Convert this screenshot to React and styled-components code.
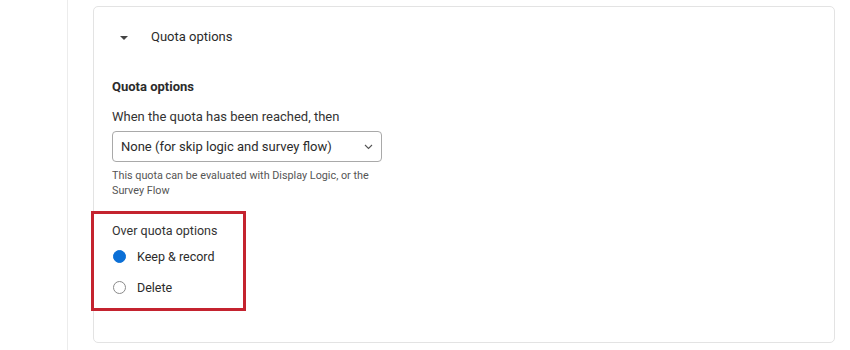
import React from "react";
import styled, { createGlobalStyle } from "styled-components";

const Global = createGlobalStyle`
  html, body { margin: 0; padding: 0; background: #fff; }
  body { font-family: Roboto, "Noto Sans", Arial, sans-serif; color: #2b2b2b; }
`;

const Page = styled.div`
  width: 850px;
  height: 350px;
  display: flex;
  overflow: hidden;
  background: #fff;
`;

const Gutter = styled.div`
  width: 67px;
  flex: none;
  border-right: 1px solid #ececec;
`;

const Main = styled.div`
  flex: 1;
  padding: 6px 15px 0 25px;
`;

const Card = styled.section`
  border: 1px solid #e3e3e3;
  border-radius: 5px;
  height: 337px;
  box-sizing: border-box;
`;

const Header = styled.div`
  display: flex;
  align-items: center;
  height: 59px;
  padding-left: 26px;
  font-size: 13px;
  color: #2b2b2b;
`;

const Caret = styled.span`
  width: 0;
  height: 0;
  border-left: 4px solid transparent;
  border-right: 4px solid transparent;
  border-top: 4px solid #444;
  margin-right: 23px;
  margin-top: 2px;
`;

const Body = styled.div`
  padding: 12px 0 0 18px;
`;

const Heading = styled.h3`
  margin: 0;
  font-size: 13px;
  font-weight: 700;
  color: #2b2b2b;
  line-height: 18px;
`;

const Label = styled.div`
  margin-top: 12px;
  font-size: 13px;
  line-height: 18px;
  color: #333;
`;

const Select = styled.div`
  margin-top: 5px;
  width: 270px;
  height: 31px;
  box-sizing: border-box;
  border: 1px solid #a9a9a9;
  border-radius: 4px;
  display: flex;
  align-items: center;
  justify-content: space-between;
  padding: 0 8px 0 8px;
  font-size: 13px;
  color: #2b2b2b;
`;

const Help = styled.p`
  margin: 6px 0 0;
  width: 270px;
  font-size: 10.8px;
  line-height: 15px;
  color: #555;
`;

const Highlight = styled.div`
  margin: 13px 0 0 -21px;
  width: 155px;
  height: 100px;
  box-sizing: border-box;
  border: 3px solid #c4232f;
  padding: 8px 0 0 18px;
`;

const GroupLabel = styled.div`
  font-size: 12.5px;
  line-height: 18px;
  color: #333;
`;

const Option = styled.div`
  display: flex;
  align-items: center;
  margin-top: ${(p) => p.$gap}px;
  font-size: 12.5px;
  color: #2b2b2b;
`;

const Radio = styled.span`
  width: 13px;
  height: 13px;
  border-radius: 50%;
  box-sizing: border-box;
  margin-left: 1px;
  margin-right: 11px;
  background: ${(p) => (p.$on ? "#0b6fd6" : "#fff")};
  border: 1px solid ${(p) => (p.$on ? "#0b6fd6" : "#8a8a8a")};
`;

export default function App() {
  return (
    <>
      <Global />
      <Page>
        <Gutter />
        <Main>
          <Card>
            <Header>
              <Caret />
              Quota options
            </Header>
            <Body>
              <Heading>Quota options</Heading>
              <Label>When the quota has been reached, then</Label>
              <Select>
                <span>None (for skip logic and survey flow)</span>
                <svg width="9" height="6" viewBox="0 0 9 6">
                  <path d="M1 1l3.5 3.5L8 1" fill="none" stroke="#555" strokeWidth="1.1" />
                </svg>
              </Select>
              <Help>This quota can be evaluated with Display Logic, or the Survey Flow</Help>
              <Highlight>
                <GroupLabel>Over quota options</GroupLabel>
                <Option $gap={9}>
                  <Radio $on />
                  Keep &amp; record
                </Option>
                <Option $gap={16}>
                  <Radio />
                  Delete
                </Option>
              </Highlight>
            </Body>
          </Card>
        </Main>
      </Page>
    </>
  );
}
